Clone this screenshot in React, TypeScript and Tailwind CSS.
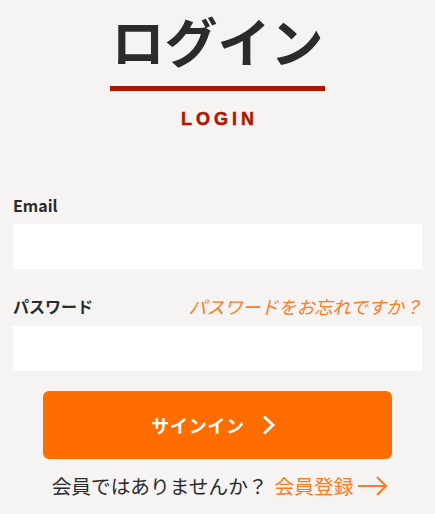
export default function App() {
  const jp = { fontFamily: '"Noto Sans CJK JP", "Noto Sans", sans-serif' };

  return (
    <div className="min-h-[514px] w-full bg-[#f5f4f2] px-[13px] text-[#2b2b2b]" style={jp}>
      {/* Heading */}
      <div className="flex flex-col items-center">
        <h1 className="pt-[2px] text-[53px] leading-[76px] font-bold">ログイン</h1>
        <div className="mt-[8px] h-[5px] w-[215px] bg-[#b01500]" />
        <p className="mt-[20px] pl-[4px] font-['Liberation_Sans',sans-serif] text-[18px] leading-[16px] font-bold tracking-[4px] text-[#b01500] [-webkit-text-stroke:0.5px_#b01500]">
          LOGIN
        </p>
      </div>

      <form className="mt-[66px]">
        {/* Email */}
        <label className="block text-[16px] leading-[24px] font-bold">Email</label>
        <input className="mt-[7px] block h-[45px] w-full bg-white outline-none" type="email" />

        {/* Password */}
        <div className="mt-[25px] flex items-center justify-between">
          <label className="text-[16px] leading-[24px] font-bold">パスワード</label>
          <a className="text-[18px] leading-[24px] text-[#ff7a1c] italic">パスワードをお忘れですか？</a>
        </div>
        <input className="mt-[8px] block h-[45px] w-full bg-white outline-none" type="password" />

        {/* Submit */}
        <div className="mt-[20px] px-[30px]">
          <button
            className="flex h-[68px] w-full items-center justify-center gap-[17px] rounded-[6px] bg-[#ff6d00] pr-[8px] text-[18px] font-bold tracking-[0.04em] text-white"
            type="button"
          >
            <span>サインイン</span>
            <svg width="14" height="20" viewBox="0 0 14 20" fill="none">
              <path d="M2 1.5l9 8.5-9 8.5" stroke="white" strokeWidth="2.8" />
            </svg>
          </button>
        </div>

        <p className="mt-[15px] flex items-center justify-center pl-[5px] text-[19.7px] leading-[24px]">
          <span>会員ではありませんか？</span>
          <a className="ml-[7px] flex items-center gap-[5px] text-[#ff7a1c]">
            会員登録
            <svg width="30" height="20" viewBox="0 0 30 20" fill="none">
              <path d="M0 10h28M19 1l9 9-9 9" stroke="#ff7a1c" strokeWidth="2" />
            </svg>
          </a>
        </p>
      </form>
    </div>
  );
}
